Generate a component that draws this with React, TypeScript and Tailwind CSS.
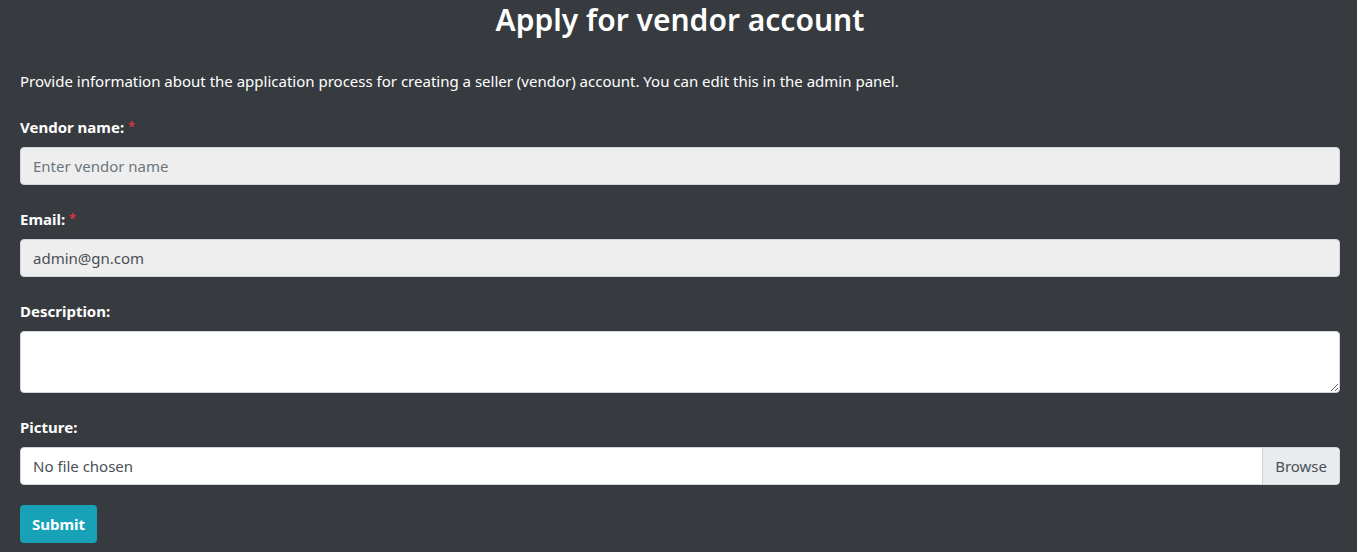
import React from "react";

const Label = ({ text, required }: { text: string; required?: boolean }) => (
  <label className="block h-[24px] leading-[24px] mb-2 text-[15px] font-bold text-white">
    {text}
    {required && <span className="ml-1 text-[12px] align-top text-[#dc3545]">*</span>}
  </label>
);

const App = () => {
  return (
    <div
      className="min-h-[552px] bg-[#373b3f] pl-[20px] pr-[17px] text-white"
      style={{ fontFamily: '"Noto Sans", "Open Sans", sans-serif' }}
    >
      <h1 className="text-center text-[30px] leading-[40px] font-semibold">Apply for vendor account</h1>
      <p className="mt-[29px] h-[24px] leading-[24px] text-[15px] mb-[22px]">
        Provide information about the application process for creating a seller (vendor) account. You can edit this in the admin panel.
      </p>

      <div className="mb-[22px]">
        <Label text="Vendor name:" required />
        <input
          readOnly
          placeholder="Enter vendor name"
          className="block w-full h-[38px] px-3 rounded bg-[#eeeeee] border border-[#ced4da] text-[15px] text-[#495057] placeholder:text-[#6c757d] outline-none"
        />
      </div>

      <div className="mb-[22px]">
        <Label text="Email:" required />
        <input
          readOnly
          value="admin@gn.com"
          className="block w-full h-[38px] px-3 rounded bg-[#eeeeee] border border-[#ced4da] text-[15px] text-[#495057] outline-none"
        />
      </div>

      <div className="mb-[22px]">
        <Label text="Description:" />
        <textarea className="block w-full h-[62px] px-3 py-1 rounded bg-white border border-[#ced4da] text-[15px] text-[#495057] outline-none" />
      </div>

      <div className="mb-[20px]">
        <Label text="Picture:" />
        <div className="flex h-[38px] rounded bg-white border border-[#ced4da] text-[15px] text-[#495057] overflow-hidden">
          <span className="flex-1 flex items-center px-3">No file chosen</span>
          <span className="flex items-center px-3 bg-[#e9ecef] border-l border-[#ced4da]">Browse</span>
        </div>
      </div>

      <button className="h-[38px] px-3 rounded bg-[#17a2b8] text-[15px] font-bold text-white">Submit</button>
    </div>
  );
};

export default App;
